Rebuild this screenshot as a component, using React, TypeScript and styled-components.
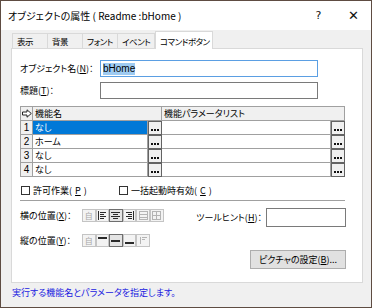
import React from 'react';
import styled, { createGlobalStyle } from 'styled-components';

const GlobalStyle = createGlobalStyle`
  html, body { margin: 0; padding: 0; background: #ffffff; }
  body {
    font-family: "Noto Sans CJK JP", "Noto Sans", sans-serif;
    font-size: 9px;
    font-feature-settings: "palt";
    color: #000;
  }
  u { text-decoration-thickness: 1px; text-underline-offset: 1px; }
`;

const Window = styled.div`
  width: 372px;
  height: 308px;
  box-sizing: border-box;
  border: 1px solid #5e4c42;
  background: #f0f0f0;
  display: flex;
  flex-direction: column;
`;

const TitleBar = styled.div`
  height: 29px;
  flex-shrink: 0;
  background: #fff;
  display: flex;
  align-items: center;
  padding-left: 7px;
`;

const TitleText = styled.div`
  flex: 1;
  font-size: 10px;
`;

const TitleBtn = styled.div`
  width: 35px;
  text-align: center;
  font-family: "DejaVu Sans", sans-serif;
  font-size: ${p => p.$size}px;
  color: #111;
`;

const Body = styled.div`
  padding: 0 8px 0 10px;
  display: flex;
  flex-direction: column;
`;

const TabRow = styled.div`
  height: 19px;
  display: flex;
  align-items: flex-end;
  padding-left: 1px;
  margin-bottom: -1px;
`;

const Tab = styled.div`
  position: relative;
  z-index: ${p => (p.$active ? 2 : 0)};
  width: ${p => p.$w}px;
  height: ${p => (p.$active ? 18 : 15)}px;
  margin-bottom: ${p => (p.$active ? 0 : 1)}px;
  box-sizing: border-box;
  border: 1px solid #d9d9d9;
  border-bottom: none;
  border-left-width: ${p => (p.$first || p.$active ? 1 : 0)}px;
  background: ${p => (p.$active ? '#fff' : '#f0f0f0')};
  padding-left: 4px;
  font-size: 8.5px;
  letter-spacing: -0.5px;
  display: flex;
  align-items: center;
  white-space: nowrap;
`;

const Panel = styled.div`
  height: 235px;
  box-sizing: border-box;
  border: 1px solid #d9d9d9;
  background: #fff;
  padding: 11px 15px 0 8px;
  display: flex;
  flex-direction: column;
`;

const FieldRow = styled.div`
  display: flex;
  align-items: center;
  height: 17px;
  margin-top: ${p => p.$top || 0}px;
`;

const Label = styled.div`
  width: ${p => p.$w}px;
  flex-shrink: 0;
  white-space: nowrap;
`;

const TextBox = styled.div`
  width: ${p => p.$w}px;
  height: ${p => p.$h || 17}px;
  box-sizing: border-box;
  border: 1px solid ${p => (p.$focus ? '#5b9fe3' : '#7a7a7a')};
  background: #fff;
  display: flex;
  align-items: center;
  padding-left: 2px;
  font-family: "Liberation Sans", sans-serif;
  font-size: 10px;
`;

const Selected = styled.span`
  background: #9ecbf2;
  line-height: 12px;
`;

const Grid = styled.div`
  margin-top: 7px;
  width: 325px;
  box-sizing: border-box;
  border-top: 1px solid #a0a0a0;
  border-left: 1px solid #a0a0a0;
  display: grid;
  grid-template-columns: 12px 115px 14px 169px 14px;
  grid-auto-rows: 14px;
`;

const Cell = styled.div`
  grid-column: ${p => p.$span || 'auto'};
  box-sizing: border-box;
  border-right: 1px solid #a0a0a0;
  border-bottom: 1px solid #a0a0a0;
  background: ${p => (p.$sel ? '#0078d7' : p.$head ? '#f0f0f0' : '#fff')};
  color: ${p => (p.$sel ? '#fff' : '#000')};
  display: flex;
  align-items: center;
  justify-content: ${p => (p.$center ? 'center' : 'flex-start')};
  padding-left: ${p => (p.$center ? 0 : 2)}px;
  font-family: ${p => (p.$num ? '"Liberation Sans", sans-serif' : 'inherit')};
  font-size: ${p => (p.$num ? 10 : 9)}px;
  white-space: nowrap;
  overflow: hidden;
`;

const DotsButton = styled.div`
  box-sizing: border-box;
  border: 1px solid #636363;
  background: #f0f0f0;
  display: flex;
  align-items: flex-end;
  justify-content: center;
  padding-bottom: 3px;
`;

const CheckRow = styled.div`
  display: flex;
  align-items: center;
  height: 12px;
  margin-top: 7px;
`;

const CheckItem = styled.label`
  display: flex;
  align-items: center;
  gap: 3px;
  width: ${p => p.$w || 'auto'};
  padding-left: 1px;
  white-space: nowrap;
`;

const Box = styled.span`
  width: 9px;
  height: 9px;
  box-sizing: border-box;
  border: 1px solid #333;
  background: #fff;
`;

const Separator = styled.div`
  margin-top: 4px;
  width: 325px;
  height: 1px;
  background: #a0a0a0;
`;

const Lower = styled.div`
  display: flex;
  margin-top: 7px;
`;

const LeftCol = styled.div`
  width: 175px;
  display: flex;
  flex-direction: column;
  gap: 12px;
  padding-top: 1px;
`;

const PosRow = styled.div`
  display: flex;
  align-items: center;
  height: 13px;
`;

const BtnGroup = styled.div`
  display: flex;
`;

const PosBtn = styled.div`
  width: 13.6px;
  height: 13px;
  box-sizing: border-box;
  border: 1px solid ${p => (p.$on ? '#6e6e6e' : '#c4c4c4')};
  background: ${p => (p.$on ? '#e4e4e4' : '#f3f3f3')};
  display: flex;
  align-items: center;
  justify-content: center;
  color: #a8a8a8;
  font-size: 8px;
`;

const RightCol = styled.div`
  width: 151px;
  display: flex;
  flex-direction: column;
  align-items: flex-end;
`;

const TipRow = styled.div`
  display: flex;
  align-items: center;
  gap: 4px;
`;

const PushButton = styled.div`
  margin-top: 23px;
  width: 96px;
  height: 19px;
  box-sizing: border-box;
  border: 1px solid #adadad;
  background: #e1e1e1;
  display: flex;
  align-items: center;
  justify-content: center;
`;

const Status = styled.div`
  padding: 3px 0 0 1px;
  color: #2020e0;
  white-space: nowrap;
`;

type IconKind = 'auto' | 'left' | 'center' | 'right' | 'offA' | 'offB' | 'top' | 'middle' | 'bottom' | 'offC';

function PosIcon({ kind }: { kind: IconKind }) {
  if (kind === 'auto') return <span>自</span>;
  const dark = '#2a2a2a';
  const gray = '#b4b4b4';
  return (
    <svg width="9" height="9" viewBox="0 0 9 9" shapeRendering="crispEdges">
      {kind === 'left' && (
        <g fill={dark}>
          <rect x="0" y="0" width="1" height="9" />
          <rect x="2" y="1" width="6" height="1" />
          <rect x="2" y="3" width="4" height="1" />
          <rect x="2" y="5" width="6" height="1" />
          <rect x="2" y="7" width="4" height="1" />
        </g>
      )}
      {kind === 'center' && (
        <g fill={dark}>
          <rect x="0" y="1" width="9" height="1" />
          <rect x="2" y="3" width="5" height="1" />
          <rect x="0" y="5" width="9" height="1" />
          <rect x="2" y="7" width="5" height="1" />
        </g>
      )}
      {kind === 'right' && (
        <g fill={dark}>
          <rect x="8" y="0" width="1" height="9" />
          <rect x="1" y="1" width="6" height="1" />
          <rect x="3" y="3" width="4" height="1" />
          <rect x="1" y="5" width="6" height="1" />
          <rect x="3" y="7" width="4" height="1" />
        </g>
      )}
      {kind === 'offA' && (
        <g fill="none" stroke={gray}>
          <rect x="0.5" y="0.5" width="8" height="8" />
          <line x1="0" y1="3.5" x2="9" y2="3.5" />
          <line x1="0" y1="6.5" x2="9" y2="6.5" />
        </g>
      )}
      {kind === 'offB' && (
        <g fill="none" stroke={gray}>
          <rect x="0.5" y="0.5" width="8" height="8" />
          <line x1="4.5" y1="0" x2="4.5" y2="9" />
          <line x1="0" y1="4.5" x2="9" y2="4.5" />
        </g>
      )}
      {kind === 'top' && (
        <g fill={dark}>
          <rect x="0" y="1" width="9" height="2" />
        </g>
      )}
      {kind === 'middle' && (
        <g fill={dark}>
          <rect x="0" y="4" width="9" height="2" />
        </g>
      )}
      {kind === 'bottom' && (
        <g fill={dark}>
          <rect x="0" y="6" width="9" height="2" />
        </g>
      )}
      {kind === 'offC' && (
        <g fill={gray}>
          <rect x="1" y="1" width="1" height="7" />
          <rect x="3" y="1" width="5" height="1" />
          <rect x="3" y="3" width="3" height="1" />
        </g>
      )}
    </svg>
  );
}

function Dots() {
  return (
    <svg width="8" height="2" viewBox="0 0 8 2" shapeRendering="crispEdges">
      <g fill="#111">
        <rect x="0" y="0" width="2" height="2" />
        <rect x="3" y="0" width="2" height="2" />
        <rect x="6" y="0" width="2" height="2" />
      </g>
    </svg>
  );
}

const rows = [
  { n: 1, name: 'なし', sel: true },
  { n: 2, name: 'ホーム' },
  { n: 3, name: 'なし' },
  { n: 4, name: 'なし' },
];

const xButtons: { kind: IconKind; on?: boolean }[] = [
  { kind: 'auto' },
  { kind: 'left' },
  { kind: 'center', on: true },
  { kind: 'right' },
  { kind: 'offA' },
  { kind: 'offB' },
];

const yButtons: { kind: IconKind; on?: boolean }[] = [
  { kind: 'auto' },
  { kind: 'top' },
  { kind: 'middle', on: true },
  { kind: 'bottom' },
  { kind: 'offC' },
];

function ArrowHead() {
  return (
    <svg width="10" height="9" viewBox="0 0 10 9">
      <path d="M0.5 3 H5 V0.8 L9.3 4.5 L5 8.2 V6 H0.5 Z" fill="#fff" stroke="#222" strokeWidth="1" strokeLinejoin="miter" />
    </svg>
  );
}

export default function App() {
  return (
    <>
      <GlobalStyle />
      <Window>
        <TitleBar>
          <TitleText>オブジェクトの属性 ( Readme :bHome )</TitleText>
          <TitleBtn $size={11}>?</TitleBtn>
          <TitleBtn $size={13}>✕</TitleBtn>
        </TitleBar>
        <Body>
          <TabRow>
            <Tab $w={36} $first>表示</Tab>
            <Tab $w={35}>背景</Tab>
            <Tab $w={35}>フォント</Tab>
            <Tab $w={37}>イベント</Tab>
            <Tab $w={58} $active>コマンドボタン</Tab>
          </TabRow>
          <Panel>
            <FieldRow>
              <Label $w={80}>オブジェクト名(<u>N</u>)：</Label>
              <TextBox $w={218} $focus>
                <Selected>bHome</Selected>
              </TextBox>
            </FieldRow>
            <FieldRow $top={5}>
              <Label $w={80}>標題(<u>T</u>)：</Label>
              <TextBox $w={218} />
            </FieldRow>

            <Grid>
              <Cell $head $center>
                <ArrowHead />
              </Cell>
              <Cell $head $span="span 2">機能名</Cell>
              <Cell $head $span="span 2">機能パラメータリスト</Cell>
              {rows.map(r => (
                <React.Fragment key={r.n}>
                  <Cell $head $center $num>{r.n}</Cell>
                  <Cell $sel={r.sel}>{r.name}</Cell>
                  <DotsButton>
                    <Dots />
                  </DotsButton>
                  <Cell />
                  <DotsButton>
                    <Dots />
                  </DotsButton>
                </React.Fragment>
              ))}
            </Grid>

            <CheckRow>
              <CheckItem $w="97px">
                <Box />
                許可作業(<u>P</u>)
              </CheckItem>
              <CheckItem>
                <Box />
                一括起動時有効(<u>C</u>)
              </CheckItem>
            </CheckRow>

            <Separator />

            <Lower>
              <LeftCol>
                <PosRow>
                  <Label $w={62}>横の位置(<u>X</u>)：</Label>
                  <BtnGroup>
                    {xButtons.map((b, i) => (
                      <PosBtn key={i} $on={b.on}>
                        <PosIcon kind={b.kind} />
                      </PosBtn>
                    ))}
                  </BtnGroup>
                </PosRow>
                <PosRow>
                  <Label $w={62}>縦の位置(<u>Y</u>)：</Label>
                  <BtnGroup>
                    {yButtons.map((b, i) => (
                      <PosBtn key={i} $on={b.on}>
                        <PosIcon kind={b.kind} />
                      </PosBtn>
                    ))}
                  </BtnGroup>
                </PosRow>
              </LeftCol>
              <RightCol>
                <TipRow>
                  <span>ツールヒント(<u>H</u>)：</span>
                  <TextBox $w={80} $h={19} />
                </TipRow>
                <PushButton>ピクチャの設定(<u>B</u>)...</PushButton>
              </RightCol>
            </Lower>
          </Panel>
          <Status>実行する機能名とパラメータを指定します。</Status>
        </Body>
      </Window>
    </>
  );
}
